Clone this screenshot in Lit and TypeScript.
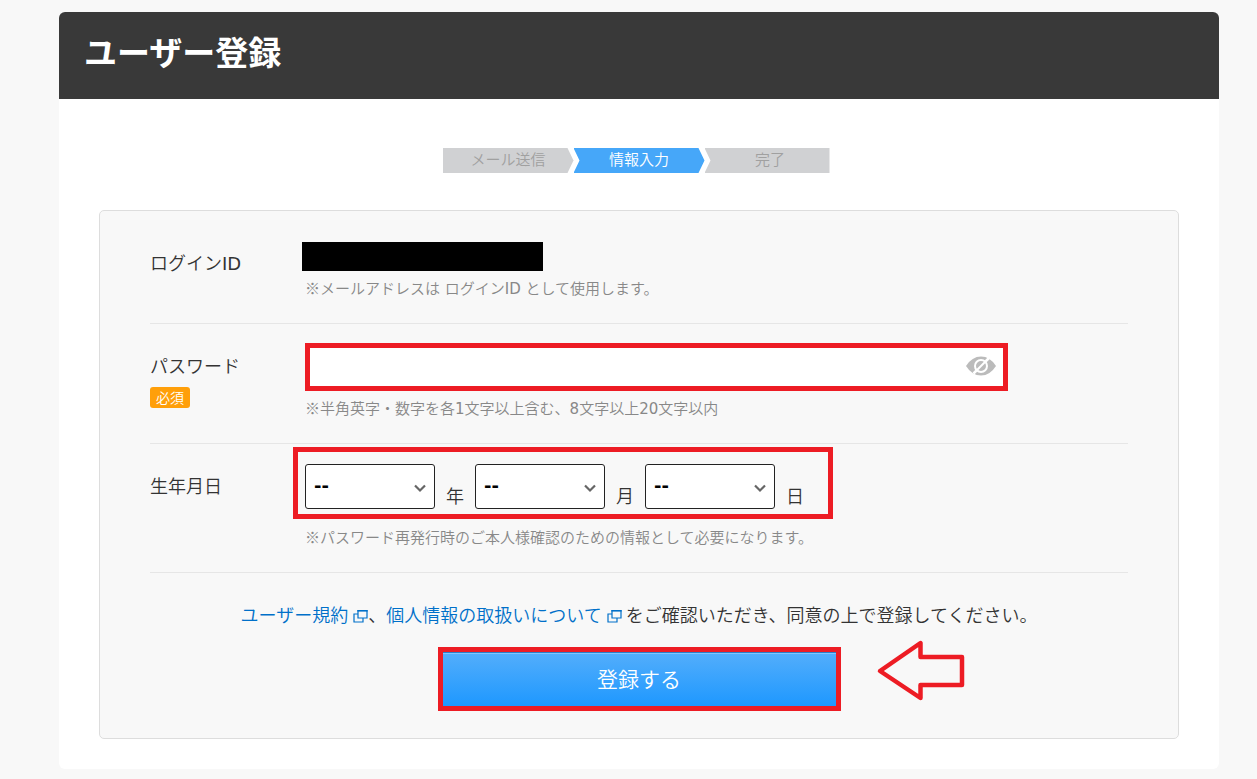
import { LitElement, html, svg, css } from "lit";
import { customElement, state } from "lit/decorators.js";
import { classMap } from "lit/directives/class-map.js";

const range = (from: number, to: number) =>
  Array.from({ length: to - from + 1 }, (_, i) => from + i);

const STEPS = ["メール送信", "情報入力", "完了"];

const BIRTH_PARTS = [
  { id: "birth-year", unit: "年", values: range(1920, 2020) },
  { id: "birth-month", unit: "月", values: range(1, 12) },
  { id: "birth-day", unit: "日", values: range(1, 31) },
];

const newWindowIcon = html`<svg class="window-icon" viewBox="0 0 15 14" aria-hidden="true">
  ${svg`<path d="M5 1.5h9v7.5H5z M5 5H1v8h9V9" fill="none" stroke="currentColor" stroke-width="1.2"/>
  <path d="M4.4 1h10.2v1.6H4.4z" fill="currentColor"/>`}
</svg>`;

@customElement("app-root")
export class AppRoot extends LitElement {
  static styles = css`
    :host {
      display: block;
      min-height: 100vh;
      box-sizing: border-box;
      padding: 12px 38px 10px 59px;
      background: #f8f8f8;
      color: #333;
      font-family: "Noto Sans CJK JP", sans-serif;
      font-size: 18px;
      font-weight: 350;
      line-height: 24px;
    }
    *,
    *::before,
    *::after {
      box-sizing: border-box;
    }
    .card {
      background: #fff;
      border-radius: 6px;
      overflow: hidden;
      padding-bottom: 30px;
    }
    .header {
      background: #393939;
      padding: 15px 25px 24px;
    }
    .title {
      margin: 0;
      color: #fff;
      font-size: 33px;
      font-weight: 700;
      line-height: 48px;
    }
    .steps {
      display: grid;
      grid-template-columns: repeat(3, 131px);
      justify-content: center;
      list-style: none;
      margin: 49px 0 37px;
      padding: 0;
      font-size: 15px;
      line-height: 22px;
      text-align: center;
      color: #a0a0a0;
    }
    .step {
      height: 25px;
      background: #d0d1d3;
      clip-path: polygon(0 0, 125px 0, 100% 50%, 125px 100%, 0 100%, 6px 50%);
    }
    .step:first-child {
      clip-path: polygon(0 0, 125px 0, 100% 50%, 125px 100%, 0 100%);
    }
    .step:last-child {
      clip-path: polygon(0 0, 125px 0, 125px 100%, 0 100%, 6px 50%);
    }
    .step.current {
      background: #46a7f9;
      color: #fff;
    }
    .panel {
      margin: 0 40px;
      padding: 0 50px 27px;
      border: 1px solid #ddd;
      border-radius: 5px;
      background: #f8f8f8;
    }
    .row {
      display: grid;
      grid-template-columns: 155px minmax(0, 1fr);
      border-bottom: 1px solid #e6e6e6;
      padding: 19px 0 22px;
    }
    .row.login {
      padding-top: 31px;
    }
    .row-label {
      padding-top: 10px;
    }
    .login .row-label {
      padding-top: 8px;
    }
    .row-label label,
    .row-label span {
      display: block;
    }
    .row-label .required {
      width: 40px;
      margin-top: 10px;
      border-radius: 3px;
      background: #ff9f0a;
      color: #fff;
      font-size: 14px;
      line-height: 20px;
      height: 21px;
      text-align: center;
    }
    .redacted {
      display: block;
      width: 241px;
      height: 29px;
      margin-left: -3px;
      background: #000;
    }
    .note {
      margin: 5px 0 0;
      color: #888;
      font-size: 15px;
      line-height: 24px;
    }
    .row-label .latin,
    .latin {
      display: inline;
      font-family: "DejaVu Sans", sans-serif;
      font-weight: 400;
    }
    .password {
      display: flex;
      align-items: center;
      max-width: 703px;
      height: 48px;
      border: 5px solid #ed1c24;
      background: #fff;
    }
    .password input {
      flex: 1;
      min-width: 0;
      height: 100%;
      border: 0;
      outline: 0;
      padding: 0 10px;
      background: transparent;
      font: inherit;
    }
    .eye {
      width: 32px;
      height: 24px;
      margin: 0 6px 2px 0;
      padding: 0;
      border: 0;
      background: none;
    }
    .eye svg {
      display: block;
      width: 32px;
      height: 24px;
    }
    .birth {
      position: relative;
      display: flex;
      align-items: flex-end;
      width: max-content;
    }
    .birth::before {
      content: "";
      position: absolute;
      inset: -17px -29px -10px -12px;
      border: 5px solid #ed1c24;
      pointer-events: none;
    }
    .birth-part {
      display: flex;
      align-items: flex-end;
      gap: 11px;
      width: 170px;
    }
    .birth-part label {
      padding-bottom: 2px;
    }
    .birth-part:last-child {
      width: auto;
    }
    .select {
      position: relative;
      width: 130px;
      height: 45px;
    }
    .select select {
      appearance: none;
      width: 100%;
      height: 100%;
      border: 1px solid #222;
      border-radius: 3px;
      background: #fff;
      color: #000;
      padding: 0 30px 2px 8px;
      font-family: "DejaVu Sans", sans-serif;
      font-size: 18px;
      font-weight: 700;
    }
    .select svg {
      position: absolute;
      right: 8px;
      top: 19px;
      width: 14px;
      height: 10px;
      pointer-events: none;
    }
    .row.birthday {
      padding: 20px 0 23px;
    }
    .birthday .row-label {
      padding-top: 9px;
    }
    .birthday .note {
      margin-top: 16px;
    }
    .consent {
      margin: 29px 0 21px;
      text-align: center;
    }
    .consent a {
      color: #0070c9;
      text-decoration: none;
    }
    .window-icon {
      width: 15px;
      height: 14px;
      margin-left: 5px;
      vertical-align: -1px;
    }
    .actions {
      position: relative;
      width: 403px;
      max-width: 100%;
      margin: 0 auto;
    }
    .submit {
      display: block;
      width: 100%;
      height: 64px;
      padding: 0 0 2px;
      border: 5px solid #ed1c24;
      background: linear-gradient(#54aefb, #1e98ff);
      box-shadow: inset 0 1px #2b7fc9, inset 0 2px #83c5fb;
      color: #fff;
      font: inherit;
      font-size: 21px;
    }
    .pointer {
      position: absolute;
      left: 438px;
      top: -8px;
      width: 90px;
      height: 64px;
      pointer-events: none;
    }
  `;

  @state() private revealed = false;

  private toggle() {
    this.revealed = !this.revealed;
  }

  render() {
    return html`
      <main class="card">
        <header class="header"><h1 class="title">ユーザー登録</h1></header>
        <ol class="steps">
          ${STEPS.map(
            (s, i) => html`<li class=${classMap({ step: true, current: i === 1 })}>${s}</li>`
          )}
        </ol>
        <form class="panel" @submit=${(e: Event) => e.preventDefault()}>
          <div class="row login">
            <div class="row-label">ログイン<span class="latin">ID</span></div>
            <div>
              <span class="redacted"></span>
              <p class="note">
                ※メールアドレスは<span class="latin"> </span>ログイン<span class="latin">ID </span>として使用します。
              </p>
            </div>
          </div>
          <div class="row">
            <div class="row-label">
              <label for="password">パスワード</label>
              <span class="required">必須</span>
            </div>
            <div>
              <div class="password">
                <input id="password" type=${this.revealed ? "text" : "password"} />
                <button class="eye" type="button" aria-label="パスワードを表示" @click=${this.toggle}>
                  <svg viewBox="0 0 32 24" aria-hidden="true">
                    <path d="M1 12Q7 2.500 16 2.500T31 12Q25 21.500 16 21.500T1 12Z" fill="#bbb" />
                    <circle cx="16" cy="12" r="6" fill="none" stroke="#fff" stroke-width="2" />
                    <path d="M8.500 19.500L12 16M20 8L24 4" stroke="#fff" stroke-width="2.500" />
                    <path d="M12 16L20 8" stroke="#fff" stroke-width="2" />
                  </svg>
                </button>
              </div>
              <p class="note">
                ※半角英字・数字を各<span class="latin">1</span>文字以上含む、<span class="latin">8</span
                >文字以上<span class="latin">20</span>文字以内
              </p>
            </div>
          </div>
          <div class="row birthday" role="group" aria-labelledby="birth-label">
            <div class="row-label"><span id="birth-label">生年月日</span></div>
            <div>
              <div class="birth">
                ${BIRTH_PARTS.map(
                  (p) => html`<div class="birth-part">
                    <div class="select">
                      <select id=${p.id}>
                        <option value="">--</option>
                        ${p.values.map((v) => html`<option value=${v}>${v}</option>`)}
                      </select>
                      <svg viewBox="0 0 14 10" aria-hidden="true">
                        <path d="M2 2.500L7 7.500L12 2.500" fill="none" stroke="#666" stroke-width="2.200" />
                      </svg>
                    </div>
                    <label for=${p.id}>${p.unit}</label>
                  </div>`
                )}
              </div>
              <p class="note">※パスワード再発行時のご本人様確認のための情報として必要になります。</p>
            </div>
          </div>
          <p class="consent">
            <a href="#terms">ユーザー規約${newWindowIcon}</a>、<a href="#privacy"
              >個人情報の取扱いについて${newWindowIcon}</a
            >
            をご確認いただき、同意の上で登録してください。
          </p>
          <div class="actions">
            <button class="submit" type="submit">登録する</button>
            <svg class="pointer" viewBox="0 0 90 64" aria-hidden="true">
              <path
                d="M4 32L44.500 4V18H86V46H44.500V59Z"
                fill="#f8f8f8"
                stroke="#ed1c24"
                stroke-width="4.500"
                stroke-linejoin="round"
              />
            </svg>
          </div>
        </form>
      </main>
    `;
  }
}
